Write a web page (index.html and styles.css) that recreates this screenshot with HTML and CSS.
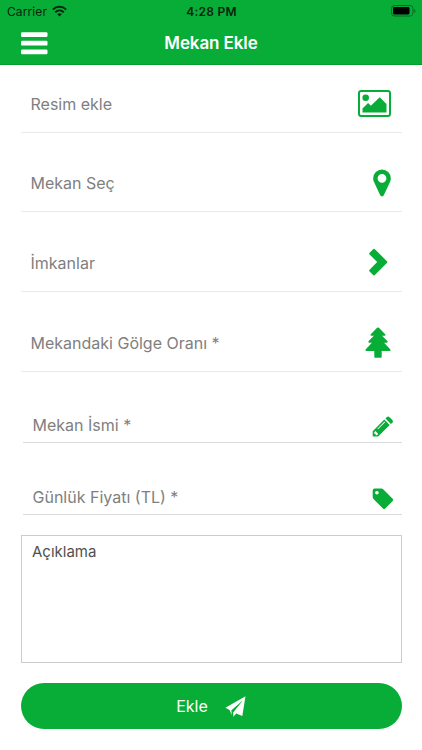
FILE: index.html
```html
<!DOCTYPE html>
<html lang="tr">
<head>
<meta charset="utf-8">
<meta name="viewport" content="width=device-width, initial-scale=1">
<title>Mekan Ekle</title>
<link rel="stylesheet" href="styles.css">
</head>
<body>
<header class="header">
  <div class="status">
    <div class="carrier"><span>Carrier</span>
      <svg width="15" height="12" viewBox="0 0 15 12" fill="none" stroke="#08250f" stroke-width="2"><path d="M.8 4.6C4.6.9 10.4.9 14.2 4.6M3.2 7.2c2.5-2.3 6.1-2.3 8.6 0"/><path d="M5.1 9.1c1.4-1.2 3.4-1.2 4.8 0L7.5 11.6z" fill="#08250f" stroke="none"/></svg>
    </div>
    <span class="time">4:28 PM</span>
    <svg class="battery" width="25" height="12" viewBox="0 0 25 12"><rect x=".5" y=".5" width="21.5" height="10.5" rx="3" fill="none" stroke="#07691f"/><rect x="2" y="2" width="16.5" height="7.5" rx="1.4" fill="#000"/><path d="M23.3 4v4c1.6-.6 1.6-3.4 0-4z" fill="#07691f"/></svg>
  </div>
  <div class="navbar">
    <svg class="menu" width="27" height="23" viewBox="0 0 27 23" fill="#fff"><rect width="26.5" height="4.8" rx="1.2" y=".2"/><rect width="26.5" height="4.8" rx="1.2" y="8.8"/><rect width="26.5" height="4.8" rx="1.2" y="17.5"/></svg>
    <h1 class="title">Mekan Ekle</h1>
  </div>
</header>
<main class="form">
  <div class="row"><span class="t-resim">Resim ekle</span>
    <svg class="i-image" width="33" height="27" viewBox="0 0 33 27"><rect x="1" y="1" width="31" height="25" rx="2.2" fill="none" stroke="#08ad37" stroke-width="2"/><circle cx="7.7" cy="7.8" r="3.3"/><path d="M4.5 22.5v-4l5.6-5.6 2.8 2.8 8.8-8.5 6.8 6.8v8.5z"/></svg>
  </div>
  <div class="row"><span class="t-sec">Mekan Seç</span>
    <svg class="i-pin" width="18" height="28" viewBox="0 0 18 28"><path fill-rule="evenodd" d="M9 .5A8.8 8.8 0 0 0 .2 9.3c0 1.5.2 2.5.7 3.5l6.3 13.5c.7 1.5 2.9 1.5 3.6 0l6.3-13.5c.5-1 .7-2 .7-3.5A8.8 8.8 0 0 0 9 .5zm0 4.4a4.4 4.4 0 1 1 0 8.8 4.4 4.4 0 0 1 0-8.8z"/></svg>
  </div>
  <div class="row"><span class="t-imkan">İmkanlar</span>
    <svg class="i-chev" width="19" height="29" viewBox="0 0 19 29"><path d="M.6 4.7 4.1 1.2q.9-.9 1.8 0l12 12q.9.9 0 1.8l-12 12q-.9.9-1.8 0L.6 23.5q-.9-.9 0-1.8l7.6-7.6L.6 6.5q-.9-.9 0-1.8z"/></svg>
  </div>
  <div class="row"><span class="t-golge">Mekandaki Gölge Oranı *</span>
    <svg class="i-tree" width="26" height="31" viewBox="0 0 26 31"><path d="M12.1.8q.9-.8 1.8 0l6.3 6.4q.9 1.1-.5 1.5h-2.6l5.2 5.4q1 1.4-.8 1.7h-2.4l6.1 6.4q1 1.5-.8 1.9h-7.7v5.7q0 1-.9 1H10.200q-.9 0-.9-1v-5.700H1.600q-1.800-.400-.800-1.900l6.100-6.400H4.500q-1.800-.300-.800-1.700l5.200-5.400H6.300q-1.400-.400-.500-1.500z"/></svg>
  </div>
  <div class="field"><span class="t-ismi">Mekan İsmi *</span>
    <svg class="i-pencil" width="22" height="22" viewBox="0 0 22 22"><path fill-rule="evenodd" d="m12.300 3.600 5.400 5.400L6.100 20.600H.7v-5.400zM2.200 16.300v1.500h1.400v1.500H5l1.200-1.200-2.800-3zM12.500 5.600 5.400 12.700l.6.6 7.100-7.100z"/><path d="m13.500 2.400 1.200-1.200q1.400-1.200 2.800 0l2.900 2.900q1.200 1.300 0 2.600l-1.500 1.300z"/></svg>
  </div>
  <div class="field"><span class="t-fiyat">Günlük Fiyatı (TL) *</span>
    <svg class="i-tag" width="22" height="22" viewBox="0 0 22 22"><path fill-rule="evenodd" d="M2.500.6h7q1 0 1.900.9l9.300 9.200q1 1.100 0 2.200l-7.500 7.600q-1.100 1-2.200 0L1.700 11.200Q.7 10.200.7 9V2.400Q.8.700 2.500.6zM4.900 3a1.800 1.800 0 1 0 0 3.600 1.800 1.800 0 0 0 0-3.600z"/></svg>
  </div>
  <div class="description"><span class="t-acik">Açıklama</span></div>
  <button class="submit" type="button"><span>Ekle</span>
    <svg width="21" height="21" viewBox="0 0 21 21"><path fill="#fff" d="M20.500.3 17.300 20l-6-2.500-3 3.200-.1-4.200L18 4.200 6.400 14.300 6.700 19l-2.100-5L.4 11.700z"/></svg>
  </button>
</main>
</body>
</html>
```
FILE: styles.css
```css
* { box-sizing: border-box; }

body {
  margin: 0;
  height: 750px;
  overflow: hidden;
  background: #fff;
  font-family: Inter, sans-serif;
  color: #808080;
}

svg { display: block; flex: none; }

.header {
  height: 65px;
  background: #08ad37;
  border-bottom: 1px solid #049d2d;
}

.status {
  display: grid;
  grid-template-columns: 1fr auto 1fr;
  align-items: center;
  height: 22px;
  padding: 0 6px 0 7px;
  color: #08250f;
  font-size: 12px;
}

.carrier { display: flex; align-items: center; gap: 5px; letter-spacing: .1px; }
.time { font-weight: 600; letter-spacing: .25px; }
.battery { justify-self: end; }

.navbar {
  display: grid;
  grid-template-columns: 60px 1fr 60px;
  align-items: center;
  height: 42px;
}

.menu { margin-left: 20.500px; }

.title {
  margin: 0;
  color: #fff;
  font-size: 17px;
  font-weight: 600;
  line-height: 22px;
  text-align: center;
  letter-spacing: -.1px;
}

.form {
  display: flex;
  flex-direction: column;
  padding: 7.600px 20.500px 0;
  fill: #08ad37;
}

.row, .field {
  display: flex;
  justify-content: space-between;
  align-items: center;
  font-size: 16px;
  line-height: 20px;
  white-space: nowrap;
}

.row {
  height: 60px;
  margin-bottom: 19.700px;
  padding: 3px 10.500px 0 10px;
  border-bottom: 1px solid #e9e9e9;
}

.field {
  height: 36px;
  margin: 0 0 36px 2px;
  padding: 0 8px 0 10px;
  border-bottom: 1px solid #dcdcdc;
}

.row + .field { margin-top: 16px; }

.i-chev { margin-right: 3px; }
.i-pencil, .i-tag { margin-top: 4px; }

.description {
  height: 128px;
  margin-top: -16px;
  padding: 6px 10.500px;
  border: 1px solid #ccc;
  color: #505050;
  font-size: 15px;
  line-height: 19px;
}

.submit {
  display: flex;
  justify-content: center;
  align-items: center;
  gap: 17px;
  height: 46px;
  margin-top: 20px;
  padding: 0;
  border: 0;
  border-radius: 23px;
  background: #08ad37;
  color: #fff;
  font: 16px/20px Inter, sans-serif;
}
```
